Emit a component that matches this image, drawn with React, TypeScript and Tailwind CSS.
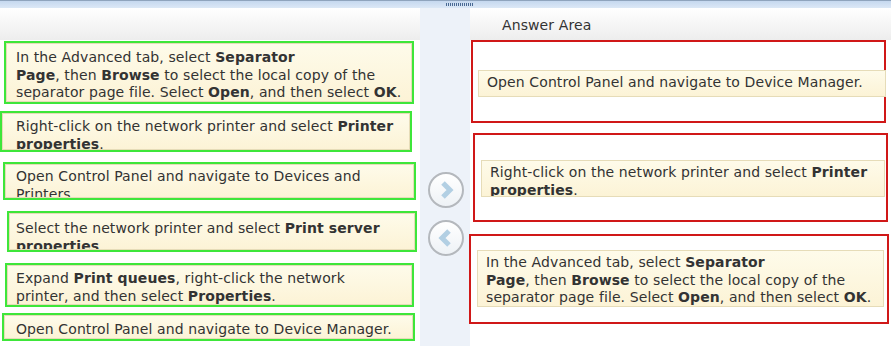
import type { ReactNode } from "react";

type Item = { box: string; inner: string; text: ReactNode };

const leftItems: Item[] = [
  {
    box: "mt-px ml-[4px] w-[410px] h-[63px]",
    inner: "pt-[5px] pl-[9px]",
    text: (
      <>
        In the Advanced tab, select <b>Separator</b>
        <br />
        <b>Page</b>, then <b>Browse</b> to select the local copy of the separator page file. Select <b>Open</b>, and then select <b>OK</b>.
      </>
    ),
  },
  {
    box: "mt-[7px] ml-0 w-[412px] h-[41px]",
    inner: "pt-[4px] pl-[13px]",
    text: (
      <>
        Right-click on the network printer and select <b>Printer properties</b>.
      </>
    ),
  },
  {
    box: "mt-[10px] ml-[3px] w-[413px] h-[38px]",
    inner: "pt-[3px] pl-[10px]",
    text: <>Open Control Panel and navigate to Devices and Printers.</>,
  },
  {
    box: "mt-[11px] ml-[7px] w-[410px] h-[41px]",
    inner: "pt-[6px] pl-[6px]",
    text: (
      <>
        Select the network printer and select <b>Print server properties</b>.
      </>
    ),
  },
  {
    box: "mt-[11px] ml-[5px] w-[409px] h-[44px]",
    inner: "pt-[4px] pl-[8px]",
    text: (
      <>
        Expand <b>Print queues</b>, right-click the network
        <br />
        printer, and then select <b>Properties</b>.
      </>
    ),
  },
  {
    box: "mt-[6px] ml-[2px] w-[413px] h-[28px]",
    inner: "pt-[5px] pl-[11px]",
    text: <>Open Control Panel and navigate to Device Manager.</>,
  },
];

function Card({ className, children }: { className: string; children: ReactNode }) {
  return (
    <div
      className={`overflow-hidden border border-[#e6dcb8] bg-gradient-to-b from-[#fefbea] to-[#fcf3d6] pr-1 text-[14px] leading-[17.5px] tracking-[0.1px] text-[#333] ${className}`}
    >
      {children}
    </div>
  );
}

function Arrow({ dir }: { dir: "right" | "left" }) {
  return (
    <div className="flex h-[36px] w-[36px] items-center justify-center rounded-full border-2 border-[#b4b8bd] bg-gradient-to-b from-white to-[#eef2f6]">
      <svg width="20" height="20" viewBox="0 0 20 20">
        <path
          d={dir === "right" ? "M7 3 L14 10 L7 17" : "M13 3 L6 10 L13 17"}
          fill="none"
          stroke="#b2cfe3"
          strokeWidth="5"
          strokeLinejoin="miter"
        />
      </svg>
    </div>
  );
}

export default function App() {
  return (
    <div
      className="h-[346px] w-[891px] overflow-hidden bg-white"
      style={{ fontFamily: '"DejaVu Sans", Verdana, sans-serif' }}
    >
      {/* top splitter bar */}
      <div className="relative h-[8px] border-t border-[#8fa4bd] bg-gradient-to-b from-[#c5d8ef] to-[#dce8f6]">
        <div className="absolute left-[446px] top-[2px] h-[3px] w-[28px] bg-[repeating-linear-gradient(90deg,#4a6a94_0px,#4a6a94_1px,transparent_1px,transparent_2px)]" />
      </div>

      <div className="flex h-[338px]">
        {/* source list */}
        <div className="w-[420px] shrink-0">
          <div className="h-[32px] bg-gradient-to-b from-white to-[#ededed]" />
          <div className="flex flex-col">
            {leftItems.map((it, i) => (
              <div key={i} className={`border-2 border-[#3ee63a] ${it.box}`}>
                <Card className={`h-full ${it.inner}`}>{it.text}</Card>
              </div>
            ))}
          </div>
        </div>

        {/* arrows column */}
        <div className="flex w-[50px] shrink-0 flex-col items-center bg-[#edf2f9] pt-[164px] pl-[2px]">
          <Arrow dir="right" />
          <div className="mt-[12px]">
            <Arrow dir="left" />
          </div>
        </div>

        {/* answer area */}
        <div className="flex-1">
          <div className="h-[32px] bg-gradient-to-b from-white to-[#ededed] pt-[8px] pl-[32px] text-[14px] leading-[18px] tracking-[0.1px] text-[#333]">
            Answer Area
          </div>
          <div className="ml-px mr-[5px] h-[83px] border-2 border-[#d01818] pt-[28px] pl-[5px]">
            <Card className="-mr-[2px] h-[27px] pt-[3px] pl-[8px]">
              Open Control Panel and navigate to Device Manager.
            </Card>
          </div>
          <div className="ml-[3px] mr-[3px] mt-[10px] h-[89px] border-2 border-[#d01818] pt-[25px] pl-[6px] pr-px">
            <Card className="h-[37px] pt-[3px] pl-[8px]">
              Right-click on the network printer and select <b>Printer properties</b>.
            </Card>
          </div>
          <div className="ml-[-1px] mr-[2px] mt-[12px] h-[90px] border-2 border-[#d01818] pt-[14px] pl-[6px] pr-[3px]">
            <Card className="h-[57px] pt-[3px] pl-[8px]">
              In the Advanced tab, select <b>Separator</b>
              <br />
              <b>Page</b>, then <b>Browse</b> to select the local copy of the separator page file. Select <b>Open</b>, and then select <b>OK</b>.
            </Card>
          </div>
        </div>
      </div>
    </div>
  );
}
